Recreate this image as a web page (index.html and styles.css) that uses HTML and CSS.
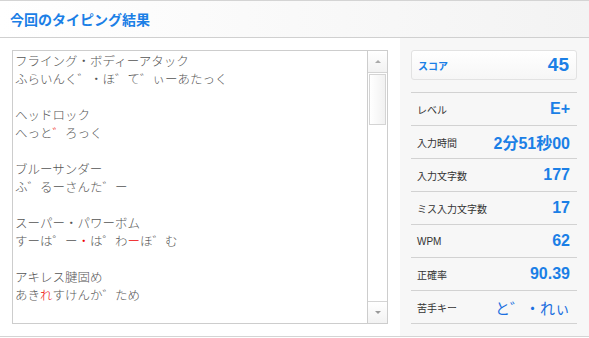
FILE: index.html
```html
<!DOCTYPE html>
<html lang="ja">
<head>
  <meta charset="UTF-8">
  <title>今回のタイピング結果</title>
  <link rel="stylesheet" href="styles.css">
</head>
<body>
  <div class="result">
    <!-- 見出し -->
    <div class="result-head">今回のタイピング結果</div>

    <div class="result-body">
      <!-- 入力ログ -->
      <div class="log-wrap">
        <div class="log">
          <div class="log-text">
            <div class="entry">
              <div>フライング・ボディーアタック</div>
              <div>ふらいんく゛・ほ゛て゛ぃーあたっく</div>
            </div>
            <div class="entry">
              <div>ヘッドロック</div>
              <div>へっと<span class="miss">゛</span>ろっく</div>
            </div>
            <div class="entry">
              <div>ブルーサンダー</div>
              <div>ふ゛るーさんた゛ー</div>
            </div>
            <div class="entry">
              <div>スーパー・パワーボム</div>
              <div>すーは゜ー<span class="miss">・</span>は゜わ<span class="miss">ー</span>ほ゛む</div>
            </div>
            <div class="entry">
              <div>アキレス腱固め</div>
              <div>あき<span class="miss">れ</span>すけんか゛ため</div>
            </div>
          </div>
          <div class="scrollbar">
            <div class="sb-btn sb-up"></div>
            <div class="sb-track"><div class="sb-thumb"></div></div>
            <div class="sb-btn sb-down"></div>
          </div>
        </div>
      </div>

      <!-- 成績 -->
      <div class="stats">
        <div class="score">
          <span class="score-label">スコア</span>
          <span class="score-value">45</span>
        </div>
        <ul class="stat-list">
          <li><span class="stat-label">レベル</span><span class="stat-value">E+</span></li>
          <li><span class="stat-label">入力時間</span><span class="stat-value">2分51秒00</span></li>
          <li><span class="stat-label">入力文字数</span><span class="stat-value">177</span></li>
          <li><span class="stat-label">ミス入力文字数</span><span class="stat-value">17</span></li>
          <li><span class="stat-label">WPM</span><span class="stat-value">62</span></li>
          <li><span class="stat-label">正確率</span><span class="stat-value">90.39</span></li>
          <li><span class="stat-label">苦手キー</span><span class="stat-keys">と゛・れぃ</span></li>
        </ul>
      </div>
    </div>
  </div>
</body>
</html>
```

FILE: styles.css
```css
body {
  margin: 0;
  background: #fff;
  font-family: "Liberation Sans", "Noto Sans CJK JP", sans-serif;
}
.result {
  width: 589px;
  border-top: 1px solid #d4d4d4;
  border-bottom: 1px solid #d4d4d4;
}
.result-head {
  height: 36px;
  line-height: 36px;
  padding-left: 10px;
  font-family: "Noto Sans CJK JP", sans-serif;
  font-size: 14px;
  font-weight: bold;
  color: #1b7fe6;
  background: linear-gradient(to right, #fff, #f3f3f3);
  border-bottom: 1px solid #d0d0d0;
}
.result-body {
  display: flex;
  height: 298px;
}

/* 入力ログ */
.log-wrap {
  flex: 1;
  padding: 12px 12px 0 12px;
}
.log {
  display: flex;
  height: 272px;
  border: 1px solid #cdcdcd;
  background: #fff;
}
.log-text {
  flex: 1;
  padding: 1px 0 0 2px;
  font-family: "Noto Sans CJK JP", sans-serif;
  font-size: 12.5px;
  font-weight: 300;
  line-height: 18px;
  color: #555;
  white-space: nowrap;
  overflow: hidden;
}
.entry {
  margin-bottom: 18px;
}
.miss {
  color: #e00;
}
.scrollbar {
  width: 19px;
  display: flex;
  flex-direction: column;
  border-left: 1px solid #cdcdcd;
}
.sb-btn {
  height: 21px;
  display: flex;
  align-items: center;
  justify-content: center;
  background: linear-gradient(#fff, #f2f2f2);
}
.sb-up {
  border-bottom: 1px solid #d4d4d4;
}
.sb-down {
  border-top: 1px solid #d4d4d4;
}
.sb-up::before {
  content: "";
  border-left: 3px solid transparent;
  border-right: 3px solid transparent;
  border-bottom: 3px solid #aaa;
}
.sb-down::before {
  content: "";
  border-left: 3px solid transparent;
  border-right: 3px solid transparent;
  border-top: 3px solid #999;
}
.sb-track {
  flex: 1;
  padding: 1px 1px 0 1px;
}
.sb-thumb {
  height: 49px;
  border: 1px solid #d4d4d4;
  background: linear-gradient(to right, #fff, #f1f1f1);
}

/* 成績 */
.stats {
  width: 166px;
  padding: 12px 12px 0 11px;
  background: #f7f7f7;
}
.score {
  display: flex;
  align-items: center;
  justify-content: space-between;
  height: 28px;
  padding: 0 7px 0 6px;
  border: 1px solid #e2e2e2;
  border-radius: 3px;
  background: linear-gradient(#fff, #f6f6f6);
  margin-bottom: 12px;
}
.score-label {
  font-family: "Noto Sans CJK JP", sans-serif;
  font-size: 10px;
  font-weight: bold;
  color: #1b7fe6;
}
.score-value {
  font-size: 19px;
  font-weight: bold;
  color: #1b7fe6;
}
.stat-list {
  list-style: none;
  margin: 0;
  padding: 0;
  border-top: 1px solid #d2d2d2;
}
.stat-list li {
  display: flex;
  align-items: center;
  justify-content: space-between;
  height: 32px;
  padding: 0 7px 0 6px;
  border-bottom: 1px solid #d2d2d2;
}
.stat-label {
  font-family: "Liberation Sans", "Noto Sans CJK JP", sans-serif;
  font-size: 10px;
  color: #333;
}
.stat-value {
  font-size: 16px;
  font-weight: bold;
  color: #1b7fe6;
}
.stat-keys {
  font-family: "Noto Sans CJK JP", sans-serif;
  font-size: 15px;
  color: #1b6fe0;
}
```
